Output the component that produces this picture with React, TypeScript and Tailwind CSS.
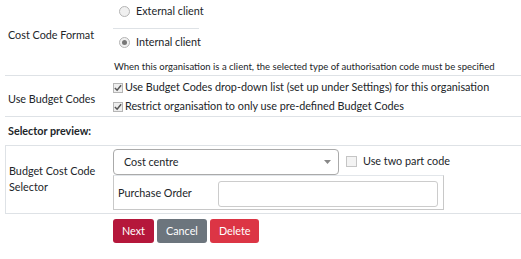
import React from "react";

const Radio = ({ checked }: { checked?: boolean }) => (
  <span className="inline-flex shrink-0 w-[11px] h-[11px] rounded-full border border-[#b5b5b5] bg-[#f0f0f0] items-center justify-center mr-[6px]">
    {checked && <span className="w-[5px] h-[5px] rounded-full bg-[#777]" />}
  </span>
);

const Check = ({ checked }: { checked?: boolean }) => (
  <span className="inline-flex shrink-0 w-[10px] h-[10px] border border-[#b5b5b5] bg-[#eee] items-center justify-center mr-[2px]">
    {checked && (
      <svg width="8" height="8" viewBox="0 0 9 9">
        <path d="M1 4.5 L3.5 7 L8 1.5" stroke="#555" strokeWidth="1.7" fill="none" />
      </svg>
    )}
  </span>
);

export default function App() {
  return (
    <div className="w-[521px] h-[259px] bg-white text-[#212529] text-[10.8px] font-['Lato',sans-serif] pl-[5px] overflow-hidden">
      {/* cost code format */}
      <div className="flex h-[76px] border-b border-[#dee2e6]">
        <div className="w-[108px] shrink-0 pl-[3px] pb-[4px] flex items-center whitespace-nowrap">Cost Code Format</div>
        <div className="flex flex-col">
          <div className="flex items-center h-[29px] pl-[6px] pb-[5px] w-[86px] border-b border-[#dee2e6] whitespace-nowrap">
            <Radio />
            <span>External client</span>
          </div>
          <div className="flex items-center h-[26px] pl-[6px]">
            <Radio checked />
            <span>Internal client</span>
          </div>
          <div className="text-[9.5px] pl-[1px] pt-[5px] whitespace-nowrap">
            When this organisation is a client, the selected type of authorisation code must be specified
          </div>
        </div>
      </div>

      {/* budget codes */}
      <div className="flex h-[41px] border-b border-[#dee2e6]">
        <div className="w-[108px] shrink-0 pl-[3px] pt-[6px] flex items-center whitespace-nowrap">Use Budget Codes</div>
        <div className="flex flex-col pt-[2px]">
          <div className="flex items-center h-[19px] whitespace-nowrap">
            <Check checked />
            Use Budget Codes drop-down list (set up under Settings) for this organisation
          </div>
          <div className="flex items-center h-[19px] whitespace-nowrap">
            <Check checked />
            Restrict organisation to only use pre-defined Budget Codes
          </div>
        </div>
      </div>

      <div className="h-[29px] flex items-center pl-[3px] font-bold border-b border-[#dee2e6]">Selector preview:</div>

      {/* preview table */}
      <div className="flex h-[68px] border-l border-b border-[#dee2e6]">
        <div className="w-[107px] shrink-0 pl-[3px] flex items-center leading-[16px] pb-[2px]">
          Budget Cost Code
          <br />
          Selector
        </div>
        <div className="flex flex-col pt-[3px]">
          <div className="flex items-start">
            <div className="w-[226px] shrink-0 h-[26px] border border-[#aaa] rounded-[4px] flex items-center justify-between pl-[10px] pr-[7px]">
              <span>Cost centre</span>
              <svg width="7" height="4" viewBox="0 0 7 4">
                <path d="M0 0 L7 0 L3.5 4 Z" fill="#888" />
              </svg>
            </div>
            <div className="flex items-center ml-[7px] mt-[4px] whitespace-nowrap">
              <span className="w-[11px] h-[11px] border border-[#c5c5c5] bg-[#f3f3f3] mr-[6px]" />
              Use two part code
            </div>
          </div>
          <div className="flex items-center w-[331px] h-[35px] border-[1.5px] border-[#c8c8c8] border-t-[#e2e6ea] pl-[4px] pt-[2px]">
            <span className="w-[100px] shrink-0">Purchase Order</span>
            <div className="w-[220px] h-[26px] border border-[#ccc] rounded-[3px]" />
          </div>
        </div>
      </div>

      <div className="flex gap-[3px] pl-[108px] pt-[5px]">
        <button className="h-[24px] px-[9px] rounded-[3px] bg-[#b5173b] text-white">Next</button>
        <button className="h-[24px] px-[9px] rounded-[3px] bg-[#6c757d] text-white">Cancel</button>
        <button className="h-[24px] px-[9px] rounded-[3px] bg-[#dc3545] text-white">Delete</button>
      </div>
    </div>
  );
}
